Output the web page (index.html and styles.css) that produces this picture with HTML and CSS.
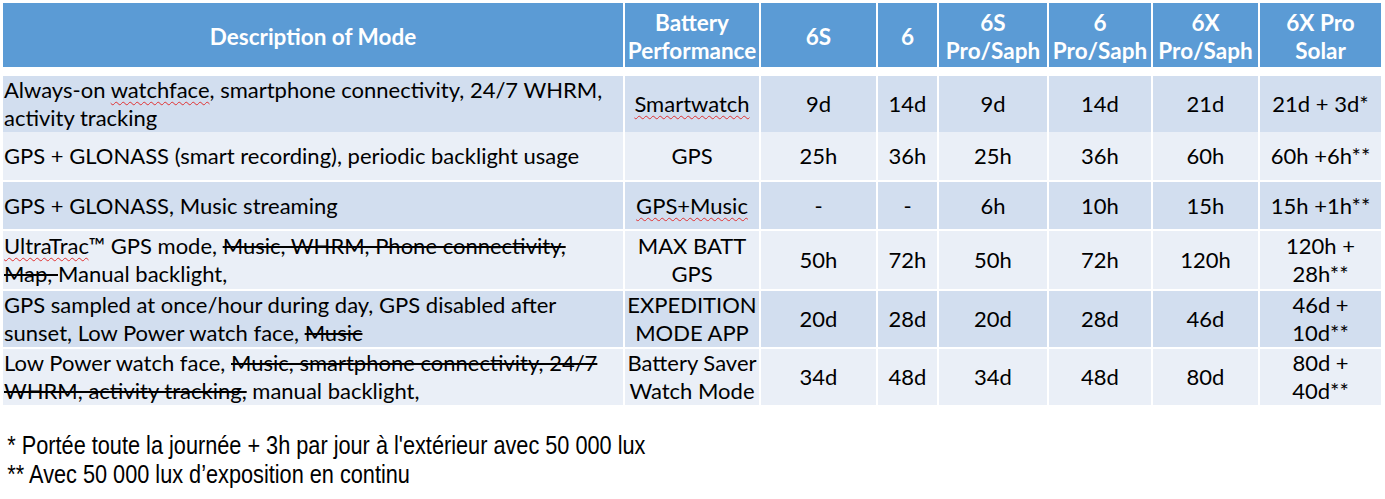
FILE: index.html
```html
<!DOCTYPE html>
<html lang="en">
<head>
<meta charset="utf-8">
<title>Battery Performance</title>
<link rel="stylesheet" href="styles.css">
</head>
<body>
<div class="table">
  <div class="row head">
    <div class="cell">Description of Mode</div>
    <div class="cell">Battery<br>Performance</div>
    <div class="cell">6S</div>
    <div class="cell">6</div>
    <div class="cell">6S<br>Pro/Saph</div>
    <div class="cell">6<br>Pro/Saph</div>
    <div class="cell">6X<br>Pro/Saph</div>
    <div class="cell">6X Pro<br>Solar</div>
  </div>
  <div class="row dark r1">
    <div class="cell desc"><p>Always-on <span class="spell">watchface</span>, smartphone connectivity, 24/7 WHRM,<br>activity tracking</p></div>
    <div class="cell"><span class="spell">Smartwatch</span></div>
    <div class="cell">9d</div>
    <div class="cell">14d</div>
    <div class="cell">9d</div>
    <div class="cell">14d</div>
    <div class="cell">21d</div>
    <div class="cell">21d + 3d*</div>
  </div>
  <div class="row light r2">
    <div class="cell desc"><p>GPS + GLONASS (smart recording), periodic backlight usage</p></div>
    <div class="cell">GPS</div>
    <div class="cell">25h</div>
    <div class="cell">36h</div>
    <div class="cell">25h</div>
    <div class="cell">36h</div>
    <div class="cell">60h</div>
    <div class="cell">60h +6h**</div>
  </div>
  <div class="row dark r3">
    <div class="cell desc"><p>GPS + GLONASS, Music streaming</p></div>
    <div class="cell"><span class="spell">GPS+Music</span></div>
    <div class="cell">-</div>
    <div class="cell">-</div>
    <div class="cell">6h</div>
    <div class="cell">10h</div>
    <div class="cell">15h</div>
    <div class="cell">15h +1h**</div>
  </div>
  <div class="row light r4">
    <div class="cell desc"><p><span class="spell">UltraTrac</span>™ GPS mode, <s>Music, WHRM, Phone connectivity,<br>Map, </s>Manual backlight,</p></div>
    <div class="cell">MAX BATT<br>GPS</div>
    <div class="cell">50h</div>
    <div class="cell">72h</div>
    <div class="cell">50h</div>
    <div class="cell">72h</div>
    <div class="cell">120h</div>
    <div class="cell">120h +<br>28h**</div>
  </div>
  <div class="row dark r5">
    <div class="cell desc"><p>GPS sampled at once/hour during day, GPS disabled after<br>sunset, Low Power watch face, <s>Music</s></p></div>
    <div class="cell">EXPEDITION<br>MODE APP</div>
    <div class="cell">20d</div>
    <div class="cell">28d</div>
    <div class="cell">20d</div>
    <div class="cell">28d</div>
    <div class="cell">46d</div>
    <div class="cell">46d +<br>10d**</div>
  </div>
  <div class="row light r6">
    <div class="cell desc"><p>Low Power watch face, <s>Music, smartphone connectivity, 24/7<br>WHRM, activity tracking,</s> manual backlight,</p></div>
    <div class="cell">Battery Saver<br>Watch Mode</div>
    <div class="cell">34d</div>
    <div class="cell">48d</div>
    <div class="cell">34d</div>
    <div class="cell">48d</div>
    <div class="cell">80d</div>
    <div class="cell">80d +<br>40d**</div>
  </div>
</div>
<div class="notes">
  <p>* Portée toute la journée + 3h par jour à l'extérieur avec 50 000 lux</p>
  <p>** Avec 50 000 lux d’exposition en continu</p>
</div>
</body>
</html>
```

FILE: styles.css
```css
html, body {
  margin: 0;
  background: #ffffff;
}
body {
  padding: 3px 0 0 3px;
  font-family: Lato, "Open Sans", sans-serif;
  color: #000000;
}
.table {
  display: flex;
  flex-direction: column;
  gap: 2px;
  width: 1378px;
}
.row {
  display: grid;
  grid-template-columns: 620px 134px 115px 59px 108px 102px 105px 121px;
  column-gap: 2px;
}
.cell {
  display: flex;
  align-items: center;
  justify-content: center;
  text-align: center;
  font-size: 22px;
  line-height: 28px;
  white-space: nowrap;
}
.cell p {
  margin: 0;
}
.desc {
  justify-content: flex-start;
  text-align: left;
  padding-left: 1px;
}
.head {
  height: 64px;
  margin-bottom: 7px;
}
.head .cell {
  background: #5b9bd5;
  color: #ffffff;
  font-weight: bold;
  font-size: 22.5px;
  padding-top: 3px;
}
.dark .cell { background: #d2deef; }
.light .cell { background: #eaeff7; }
.r1 { height: 54px; }
.r2 { height: 48px; }
.r3 { height: 47px; }
.r4 { height: 58px; }
.r5 { height: 56px; }
.r6 { height: 56px; }
.spell {
  text-decoration: underline wavy #e03030;
  text-decoration-thickness: 1px;
  text-underline-offset: 3px;
}
s {
  text-decoration-thickness: 1.5px;
}
.notes {
  margin-top: 26px;
  padding-left: 5px;
  font-family: "Liberation Sans", Arial, sans-serif;
  font-size: 25px;
  line-height: 29px;
  transform: scaleX(0.868);
  transform-origin: left top;
  white-space: nowrap;
}
.notes p {
  margin: 0;
}
```
